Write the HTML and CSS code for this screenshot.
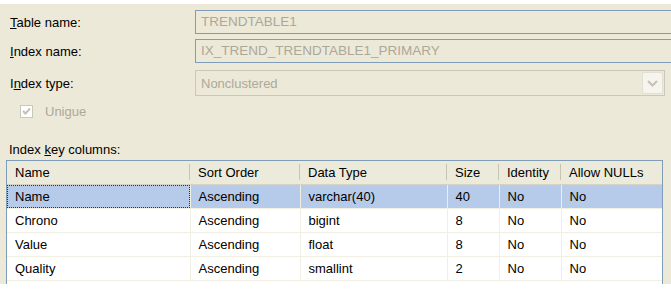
FILE: index.html
```html
<!DOCTYPE html>
<html lang="en">
<head>
  <meta charset="UTF-8" />
  <title>Index Properties</title>
  <link rel="stylesheet" href="styles.css">
</head>
<body>

  <!-- Index properties form -->
  <div class="form">
    <div class="row">
      <label class="label"><u>T</u>able name:</label>
      <div class="field">TRENDTABLE1</div>
    </div>
    <div class="row row-second">
      <label class="label"><u>I</u>ndex name:</label>
      <div class="field">IX_TREND_TRENDTABLE1_PRIMARY</div>
    </div>
    <div class="row row-combo">
      <label class="label">I<u>n</u>dex type:</label>
      <div class="combo">
        <span>Nonclustered</span>
        <span class="combo-btn">
          <svg width="11" height="7" viewBox="0 0 11 7"><path d="M1 1 L5.5 5.5 L10 1" fill="none" stroke="#c4c2b6" stroke-width="2"/></svg>
        </span>
      </div>
    </div>
    <div class="check-row">
      <span class="checkbox">
        <svg width="9" height="9" viewBox="0 0 9 9"><path d="M1 4 L3.5 6.5 L8 1.5" fill="none" stroke="#c4c1b4" stroke-width="2"/></svg>
      </span>
      <span class="check-text">Unigue</span>
    </div>
    <div class="key-label">Index <u>k</u>ey columns:</div>
  </div>

  <!-- Key columns list -->
  <div class="grid">
    <table>
      <thead>
        <tr>
          <th class="c1">Name</th>
          <th class="c2">Sort Order</th>
          <th class="c3">Data Type</th>
          <th class="c4">Size</th>
          <th class="c5">Identity</th>
          <th class="c6">Allow NULLs</th>
        </tr>
      </thead>
      <tbody>
        <tr class="selected">
          <td><span class="focus">Name</span></td>
          <td>Ascending</td>
          <td>varchar(40)</td>
          <td>40</td>
          <td>No</td>
          <td>No</td>
        </tr>
        <tr>
          <td>Chrono</td>
          <td>Ascending</td>
          <td>bigint</td>
          <td>8</td>
          <td>No</td>
          <td>No</td>
        </tr>
        <tr>
          <td>Value</td>
          <td>Ascending</td>
          <td>float</td>
          <td>8</td>
          <td>No</td>
          <td>No</td>
        </tr>
        <tr>
          <td>Quality</td>
          <td>Ascending</td>
          <td>smallint</td>
          <td>2</td>
          <td>No</td>
          <td>No</td>
        </tr>
      </tbody>
    </table>
  </div>

</body>
</html>
```

FILE: styles.css
```css
* {
  box-sizing: border-box;
}

html {
  background: #fff;
  overflow: hidden;
}

body {
  margin: 0;
  height: 284px;
  font-family: "Liberation Sans", Arial, sans-serif;
  font-size: 13px;
  color: #000;
  background: #ece9d8;
  border-top: 4px solid #fff;
  overflow: hidden;
}

/* Form */
.form {
  padding: 6px 0 0 10px;
}

.row {
  display: flex;
  align-items: center;
  height: 24px;
}

.row-second {
  margin-top: 5px;
}

.row-combo {
  margin-top: 7px;
  height: 26px;
}

.label {
  width: 185px;
  flex-shrink: 0;
}

.field {
  flex-shrink: 0;
  width: 490px;
  height: 24px;
  border: 1px solid #7f9db9;
  padding-left: 5px;
  line-height: 22px;
  font-size: 13.5px;
  color: #aca899;
}

.combo {
  flex-shrink: 0;
  width: 470px;
  height: 26px;
  border: 1px solid #cbc8ba;
  padding: 0 1px 0 5px;
  display: flex;
  align-items: center;
  justify-content: space-between;
  color: #aca899;
}

.combo-btn {
  width: 21px;
  height: 22px;
  background: #f5f4ef;
  border: 1px solid #e2e0d5;
  border-radius: 2px;
  display: flex;
  align-items: center;
  justify-content: center;
}

.check-row {
  display: flex;
  align-items: center;
  margin-top: 8px;
  padding-left: 10px;
  height: 14px;
}

.checkbox {
  width: 13px;
  height: 13px;
  border: 1px solid #cac8bb;
  background: #fff;
  display: flex;
  align-items: center;
  justify-content: center;
}

.check-text {
  margin-left: 12px;
  color: #aca899;
}

.key-label {
  margin: 24px 0 0 -1px;
  height: 16px;
  line-height: 16px;
}

/* List */
.grid {
  margin: 2px 0 0 6px;
  width: 657px;
  height: 125px;
  background: #fff;
  border: 1px solid #7f9db9;
  border-bottom: none;
}

table {
  border-collapse: collapse;
  table-layout: fixed;
  width: 655px;
}

th {
  position: relative;
  height: 23px;
  font-weight: normal;
  text-align: left;
  padding: 0 0 0 8px;
  background: #ebeadb;
  border-bottom: 1px solid #d6d3c4;
}

th::after {
  content: "";
  position: absolute;
  right: 0;
  top: 3px;
  bottom: 4px;
  width: 1px;
  background: #c7c5b2;
}

th.c6::after {
  display: none;
}

.c1 { width: 183px; }
.c2 { width: 110px; }
.c3 { width: 147px; }
.c4 { width: 52px; }
.c5 { width: 62px; }
.c6 { width: 101px; }

td {
  height: 24px;
  padding: 0 0 0 8px;
  border-right: 1px solid #f1efe2;
  border-bottom: 1px solid #f1efe2;
  white-space: nowrap;
}

td:last-child {
  border-right: none;
}

.selected td {
  background: #b6cae9;
}

.selected td:first-child {
  position: relative;
}

.focus::before {
  content: "";
  position: absolute;
  inset: 0;
  border: 1px dotted #333;
}
```
